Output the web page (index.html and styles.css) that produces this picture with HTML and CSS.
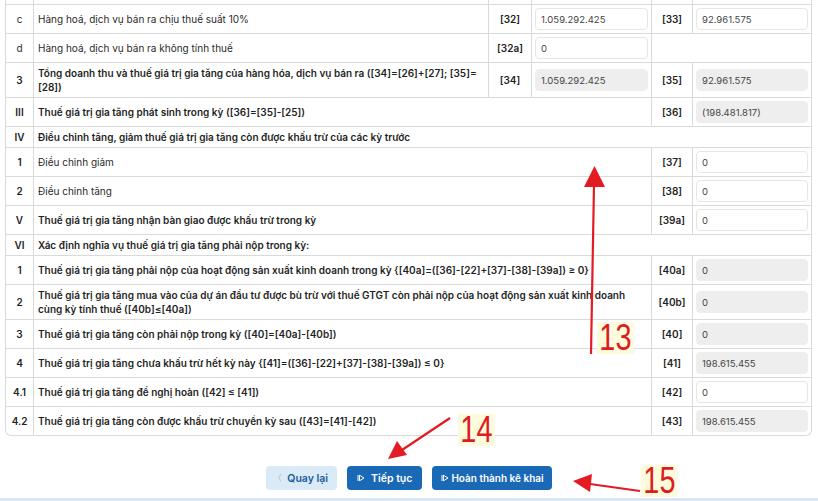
FILE: index.html
```html
<!DOCTYPE html>
<html lang="vi">
<head>
  <meta charset="UTF-8">
  <title>Tờ khai thuế GTGT</title>
  <link rel="stylesheet" href="styles.css">
</head>
<body>

  <div class="sheet">
    <table class="vat">
      <colgroup>
        <col class="c-num">
        <col class="c-desc">
        <col class="c-code">
        <col class="c-val">
        <col class="c-code2">
        <col class="c-val2">
      </colgroup>
      <tbody>
        <!-- phần cuối của dòng phía trên (đã cuộn qua) -->
        <tr class="tail">
          <td></td><td></td><td></td><td></td><td></td><td></td>
        </tr>
        <tr>
          <td class="num">c</td>
          <td>Hàng hoá, dịch vụ bán ra chịu thuế suất 10%</td>
          <td class="code">[32]</td>
          <td class="val"><input class="field" value="1.059.292.425"></td>
          <td class="code">[33]</td>
          <td class="val"><input class="field" value="92.961.575"></td>
        </tr>
        <tr>
          <td class="num">d</td>
          <td>Hàng hoá, dịch vụ bán ra không tính thuế</td>
          <td class="code">[32a]</td>
          <td class="val"><input class="field" value="0"></td>
          <td colspan="2"></td>
        </tr>
        <tr class="strong">
          <td class="num">3</td>
          <td>Tổng doanh thu và thuế giá trị gia tăng của hàng hóa, dịch vụ bán ra ([34]=[26]+[27]; [35]=<br>[28])</td>
          <td class="code">[34]</td>
          <td class="val"><input class="field locked" value="1.059.292.425" readonly></td>
          <td class="code">[35]</td>
          <td class="val"><input class="field locked" value="92.961.575" readonly></td>
        </tr>
        <tr class="strong">
          <td class="num">III</td>
          <td colspan="3">Thuế giá trị gia tăng phát sinh trong kỳ ([36]=[35]-[25])</td>
          <td class="code">[36]</td>
          <td class="val"><input class="field locked" value="(198.481.817)" readonly></td>
        </tr>
        <tr class="strong">
          <td class="num">IV</td>
          <td colspan="5">Điều chỉnh tăng, giảm thuế giá trị gia tăng còn được khấu trừ của các kỳ trước</td>
        </tr>
        <tr>
          <td class="num bold">1</td>
          <td colspan="3">Điều chỉnh giảm</td>
          <td class="code">[37]</td>
          <td class="val"><input class="field" value="0"></td>
        </tr>
        <tr>
          <td class="num bold">2</td>
          <td colspan="3">Điều chỉnh tăng</td>
          <td class="code">[38]</td>
          <td class="val"><input class="field" value="0"></td>
        </tr>
        <tr class="strong">
          <td class="num">V</td>
          <td colspan="3">Thuế giá trị gia tăng nhận bàn giao được khấu trừ trong kỳ</td>
          <td class="code">[39a]</td>
          <td class="val"><input class="field" value="0"></td>
        </tr>
        <tr class="strong">
          <td class="num">VI</td>
          <td colspan="5">Xác định nghĩa vụ thuế giá trị gia tăng phải nộp trong kỳ:</td>
        </tr>
        <tr class="strong">
          <td class="num">1</td>
          <td colspan="3">Thuế giá trị gia tăng phải nộp của hoạt động sản xuất kinh doanh trong kỳ {[40a]=([36]-[22]+[37]-[38]-[39a]) ≥ 0}</td>
          <td class="code">[40a]</td>
          <td class="val"><input class="field locked" value="0" readonly></td>
        </tr>
        <tr class="strong">
          <td class="num">2</td>
          <td colspan="3">Thuế giá trị gia tăng mua vào của dự án đầu tư được bù trừ với thuế GTGT còn phải nộp của hoạt động sản xuất kinh doanh cùng kỳ tính thuế ([40b]≤[40a])</td>
          <td class="code">[40b]</td>
          <td class="val"><input class="field locked" value="0" readonly></td>
        </tr>
        <tr class="strong">
          <td class="num">3</td>
          <td colspan="3">Thuế giá trị gia tăng còn phải nộp trong kỳ ([40]=[40a]-[40b])</td>
          <td class="code">[40]</td>
          <td class="val"><input class="field locked" value="0" readonly></td>
        </tr>
        <tr class="strong">
          <td class="num">4</td>
          <td colspan="3">Thuế giá trị gia tăng chưa khấu trừ hết kỳ này {[41]=([36]-[22]+[37]-[38]-[39a]) ≤ 0}</td>
          <td class="code">[41]</td>
          <td class="val"><input class="field locked" value="198.615.455" readonly></td>
        </tr>
        <tr class="strong">
          <td class="num">4.1</td>
          <td colspan="3">Thuế giá trị gia tăng đề nghị hoàn ([42] ≤ [41])</td>
          <td class="code">[42]</td>
          <td class="val"><input class="field" value="0"></td>
        </tr>
        <tr class="strong">
          <td class="num">4.2</td>
          <td colspan="3">Thuế giá trị gia tăng còn được khấu trừ chuyển kỳ sau ([43]=[41]-[42])</td>
          <td class="code">[43]</td>
          <td class="val"><input class="field locked" value="198.615.455" readonly></td>
        </tr>
      </tbody>
    </table>
  </div>

  <div class="actions">
    <button class="btn btn-light" type="button"><span class="chev">〈</span>Quay lại</button>
    <button class="btn btn-blue" type="button">
      <svg class="ico" width="8" height="8" viewBox="0 0 8 8"><path d="M1 1v6M2.5 1.2 7 4 2.5 6.8z" fill="none" stroke="#fff" stroke-width="1"/></svg>
      Tiếp tục
    </button>
    <button class="btn btn-blue btn-tight" type="button">
      <svg class="ico" width="8" height="8" viewBox="0 0 8 8"><path d="M1 1v6M2.5 1.2 7 4 2.5 6.8z" fill="none" stroke="#fff" stroke-width="1"/></svg>
      Hoàn thành kê khai
    </button>
  </div>

  <div class="strip"></div>

  <!-- hướng dẫn: mũi tên và số bước -->
  <svg class="marks" width="818" height="501" viewBox="0 0 818 501">
    <g stroke="#e31b23" stroke-width="2.2" fill="#e31b23">
      <line x1="591" y1="354" x2="594" y2="185"/>
      <polygon points="594.5,166 605,187 584,187" stroke="none"/>
      <line x1="450" y1="418" x2="402" y2="450"/>
      <polygon points="388,459 397,441 407,455" stroke="none"/>
      <line x1="640" y1="491" x2="590" y2="484"/>
      <polygon points="573,481 592,474 590,492" stroke="none"/>
    </g>
  </svg>
  <span class="step s13">13</span>
  <span class="step s14">14</span>
  <span class="step s15">15</span>

</body>
</html>
```

FILE: styles.css
```css
body {
  margin: 0;
  font-family: Inter, "Noto Sans", sans-serif;
  font-size: 10px;
  color: #2b2b2b;
  background: #fff;
  position: relative;
  width: 818px;
  height: 501px;
  overflow: hidden;
}
.sheet {
  margin: 0 6px 0 5px;
  border: 1px solid #dadada;
  border-top: 0;
  border-radius: 0 0 6px 6px;
  overflow: hidden;
}
.vat {
  width: 100%;
  table-layout: fixed;
  border-collapse: separate;
  border-spacing: 0;
}
.c-num { width: 27px; }
.c-desc { width: 455px; }
.c-code { width: 43px; }
.c-val { width: 120px; }
.c-code2 { width: 41px; }
.c-val2 { width: 119px; }
.vat td {
  border-top: 1px solid #dadada;
  border-left: 1px solid #dadada;
  padding: 3px 4px;
  line-height: 14px;
  vertical-align: middle;
}
.vat td:first-child {
  border-left: 0;
}
.vat tr.tail td {
  border-top: 0;
  height: 4px;
  padding: 0;
  line-height: 4px;
}
.num {
  text-align: center;
}
.bold, .strong td {
  font-weight: 600;
  color: #1f1f1f;
}
.code {
  text-align: center;
  font-weight: 600;
  color: #1f1f1f;
}
.vat td.val {
  padding: 3px 3px;
}
.field {
  display: block;
  box-sizing: border-box;
  width: 100%;
  height: 22px;
  padding: 0 5px;
  border: 1px solid #e6e6e6;
  border-radius: 4px;
  font-family: Inter, "Noto Sans", sans-serif;
  font-size: 9.5px;
  color: #454545;
  background: #fff;
  outline: none;
}
.field.locked {
  background: #eeeeee;
  border-color: #eeeeee;
}
.actions {
  display: flex;
  justify-content: center;
  gap: 10px;
  margin-top: 30px;
}
.btn {
  display: flex;
  align-items: center;
  gap: 6px;
  height: 24px;
  padding: 0 10px;
  border: 0;
  border-radius: 4px;
  font-family: Inter, "Noto Sans", sans-serif;
  font-size: 10.5px;
  font-weight: 600;
  cursor: pointer;
}
.btn-light {
  background: #dbeaf7;
  color: #1c5c9e;
  gap: 5px;
  padding: 0 9px 0 7px;
}
.chev {
  font-weight: 300;
  font-size: 9px;
  color: #6c8fb5;
}
.btn-blue {
  background: #1a69b6;
  color: #fff;
}
.btn-tight {
  gap: 2px;
  padding: 0 8px 0 9px;
  font-size: 10px;
}
.strip {
  margin-top: 8px;
  height: 6px;
  background: #d7e7f5;
}
.marks {
  position: absolute;
  left: 0;
  top: 0;
  pointer-events: none;
}
.step {
  position: absolute;
  padding: 0 3px;
  background: #fdfbdc;
  color: #dd1c22;
  font-family: "Liberation Sans", sans-serif;
  font-size: 37px;
  line-height: 32px;
  transform: scaleX(0.78);
  transform-origin: left top;
}
.s13 { left: 597px; top: 322px; }
.s14 { left: 458px; top: 414px; }
.s15 { left: 641px; top: 465px; }
```
